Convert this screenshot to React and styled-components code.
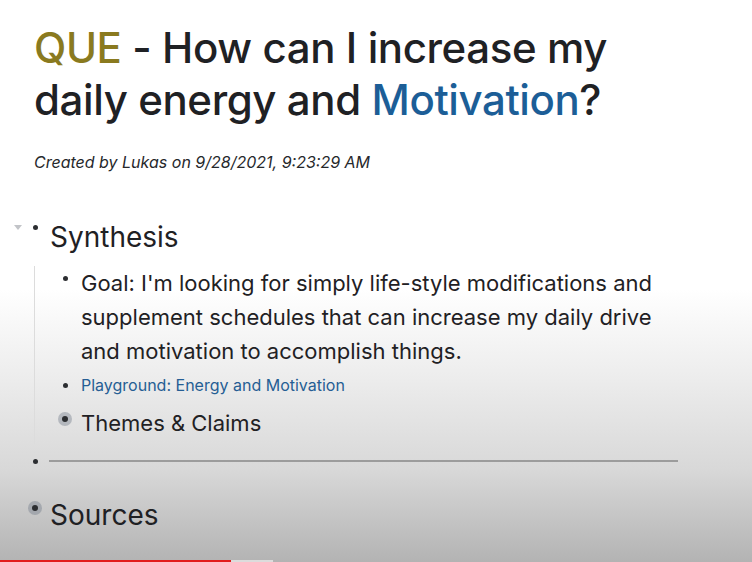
import React from 'react';
import styled, { createGlobalStyle } from 'styled-components';

const GlobalStyle = createGlobalStyle`
  html, body {
    margin: 0;
    padding: 0;
  }
  body {
    font-family: Inter, "Noto Sans", "Liberation Sans", sans-serif;
    color: #1f2124;
  }
`;

const Page = styled.div`
  width: 752px;
  height: 562px;
  overflow: hidden;
  display: flex;
  flex-direction: column;
  padding: 22px 0 0 12px;
  box-sizing: border-box;
  background: linear-gradient(
    180deg,
    #ffffff 0px,
    #ffffff 290px,
    #ececec 380px,
    #d8d8d8 470px,
    #b3b3b3 562px
  );
`;

const Title = styled.h1`
  margin: 0 0 0 22px;
  font-size: 42px;
  line-height: 52px;
  font-weight: 500;
  letter-spacing: -0.4px;
  color: #1f2124;
  max-width: 600px;
`;

const Tag = styled.span`
  color: ${(p) => p.$color};
`;

const Meta = styled.p`
  margin: 26px 0 0 22px;
  font-size: 16px;
  line-height: 20px;
  font-style: italic;
  color: #26282b;
`;

const Outline = styled.div`
  margin-top: 47px;
  display: flex;
  flex-direction: column;
`;

const Row = styled.div`
  display: flex;
  align-items: flex-start;
  padding-left: ${(p) => (p.$child ? '22px' : '0')};
  margin-top: ${(p) => p.$gap || 0}px;
`;

const Toggle = styled.div`
  width: 15px;
  flex: none;
  height: ${(p) => p.$h}px;
  display: flex;
  align-items: center;
  padding-left: 2px;
  box-sizing: border-box;
  margin-top: -10px;
`;

const Caret = styled.span`
  width: 0;
  height: 0;
  border-left: 4px solid transparent;
  border-right: 4px solid transparent;
  border-top: 5px solid #c2c4c8;
`;

const BulletBox = styled.div`
  width: 16px;
  flex: none;
  display: flex;
  justify-content: center;
  margin-top: ${(p) => p.$top}px;
`;

const Dot = styled.span`
  width: ${(p) => (p.$halo ? 6 : 5)}px;
  height: ${(p) => (p.$halo ? 6 : 5)}px;
  border-radius: 50%;
  background: #2c2e31;
  box-shadow: ${(p) => (p.$halo ? '0 0 0 4px rgba(110, 120, 135, 0.4)' : 'none')};
`;

const Text = styled.div`
  margin-left: ${(p) => (p.$child ? 8 : 7)}px;
  font-size: ${(p) => p.$size}px;
  line-height: ${(p) => p.$lh}px;
  color: ${(p) => p.$color || '#1f2124'};
  max-width: ${(p) => p.$max || 'none'};
`;

const Children = styled.div`
  margin-left: 22px;
  border-left: 1px solid #dcdcdc;
  display: flex;
  flex-direction: column;
  padding-bottom: 4px;
  margin-top: 11px;
`;

const Rule = styled.div`
  margin-left: 6px;
  width: 629px;
  height: 2px;
  background: #9c9c9c;
  align-self: center;
`;

const DividerRow = styled.div`
  display: flex;
  align-items: center;
  height: 20px;
  margin-top: 7px;
  padding-left: 15px;
`;

const Track = styled.div`
  margin: auto 0 0 -12px;
  height: 2px;
  display: flex;
`;

const Played = styled.div`
  width: 231px;
  background: #e21b1b;
`;

const Buffered = styled.div`
  width: 42px;
  background: #dcdcdc;
`;

export default function App() {
  return (
    <>
      <GlobalStyle />
      <Page>
        <Title>
          <Tag $color="#8a7a1f">QUE</Tag> - How can I increase my daily energy and{' '}
          <Tag $color="#1c5e97">Motivation</Tag>?
        </Title>
        <Meta>Created by Lukas on 9/28/2021, 9:23:29 AM</Meta>

        <Outline>
          <Row>
            <Toggle $h={36}>
              <Caret />
            </Toggle>
            <BulletBox $top={6}>
              <Dot />
            </BulletBox>
            <Text $size={28} $lh={36}>Synthesis</Text>
          </Row>

          <Children>
            <Row $child>
              <BulletBox $top={10}>
                <Dot />
              </BulletBox>
              <Text $child $size={22} $lh={34} $max="592px">
                Goal: I'm looking for simply life-style modifications and supplement
                schedules that can increase my daily drive and motivation to accomplish
                things.
              </Text>
            </Row>
            <Row $child $gap={4}>
              <BulletBox $top={11}>
                <Dot />
              </BulletBox>
              <Text $child $size={16} $lh={26} $color="#255e94">
                Playground: Energy and Motivation
              </Text>
            </Row>
            <Row $child $gap={8}>
              <BulletBox $top={10}>
                <Dot $halo />
              </BulletBox>
              <Text $child $size={22} $lh={34}>Themes &amp; Claims</Text>
            </Row>
          </Children>

          <DividerRow>
            <BulletBox $top={0}>
              <Dot />
            </BulletBox>
            <Rule />
          </DividerRow>

          <Row $gap={26}>
            <Toggle $h={36} />
            <BulletBox $top={8}>
              <Dot $halo />
            </BulletBox>
            <Text $size={28} $lh={36}>Sources</Text>
          </Row>
        </Outline>

        <Track>
          <Played />
          <Buffered />
        </Track>
      </Page>
    </>
  );
}
